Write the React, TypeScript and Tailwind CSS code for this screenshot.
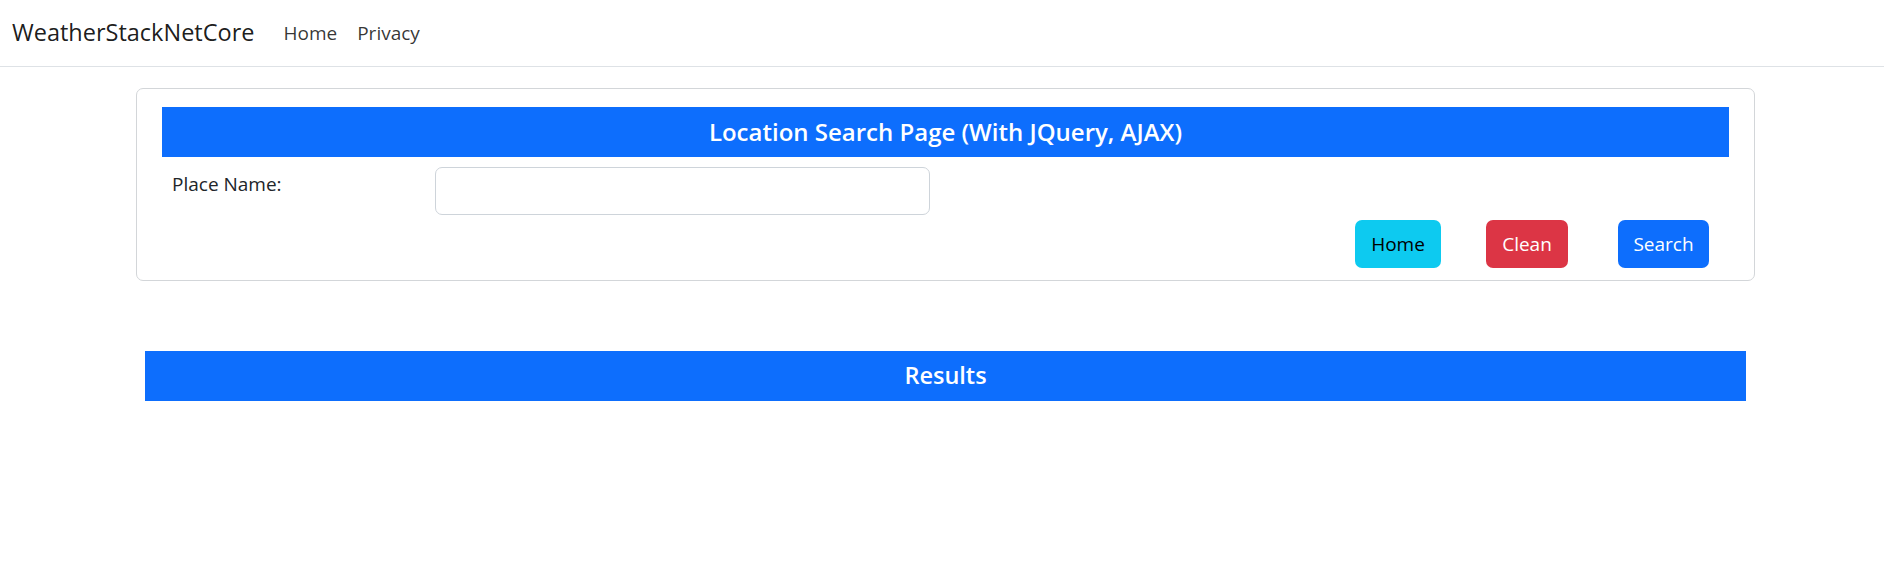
import React, { useState } from 'react';

const App: React.FC = () => {
  const [place, setPlace] = useState('');

  return (
    <div className="min-h-[569px] bg-white text-[19px] text-[#212529]" style={{ fontFamily: '"Open Sans", "Noto Sans", sans-serif' }}>
      <nav className="h-[67px] border-b border-[#dee2e6] flex items-center px-[12px]">
        <span className="text-[23.5px] text-black/90 mr-[29px] pb-[1px]">WeatherStackNetCore</span>
        <a className="text-[19px] text-black/80 mr-[20px]" href="#">Home</a>
        <a className="text-[19px] text-black/80" href="#">Privacy</a>
      </nav>

      <div className="ml-[136px] w-[1619px] pt-[21px]">
        <div className="border border-[#d3d6d9] rounded-[7px] pt-[18px] px-[25px] pb-[12px]">
          <div className="h-[50px] bg-[#0d6efd] text-white flex items-center justify-center">
            <h5 className="text-[24px] font-semibold">Location Search Page (With JQuery, AJAX)</h5>
          </div>
          <div className="flex mt-[10px]">
            <label className="w-[273px] pl-[10px] pt-[2px] leading-[30px]">Place Name:</label>
            <input
              type="text"
              value={place}
              onChange={(e) => setPlace(e.target.value)}
              className="w-[495px] h-[48px] border border-[#ced4da] rounded-[7px] px-[15px] outline-none"
            />
          </div>
          <div className="flex justify-end mt-[5px] pr-[20px]">
            <button className="w-[86px] h-[48px] rounded-[7px] bg-[#0dcaf0] text-black">Home</button>
            <button className="w-[82px] h-[48px] rounded-[7px] bg-[#dc3545] text-white ml-[45px]">Clean</button>
            <button className="w-[91px] h-[48px] rounded-[7px] bg-[#0d6efd] text-white ml-[50px]">Search</button>
          </div>
        </div>
      </div>

      <div className="ml-[145px] w-[1601px] mt-[70px] h-[50px] bg-[#0d6efd] text-white flex items-center justify-center">
        <h5 className="text-[23.5px] font-semibold">Results</h5>
      </div>
    </div>
  );
};

export default App;
